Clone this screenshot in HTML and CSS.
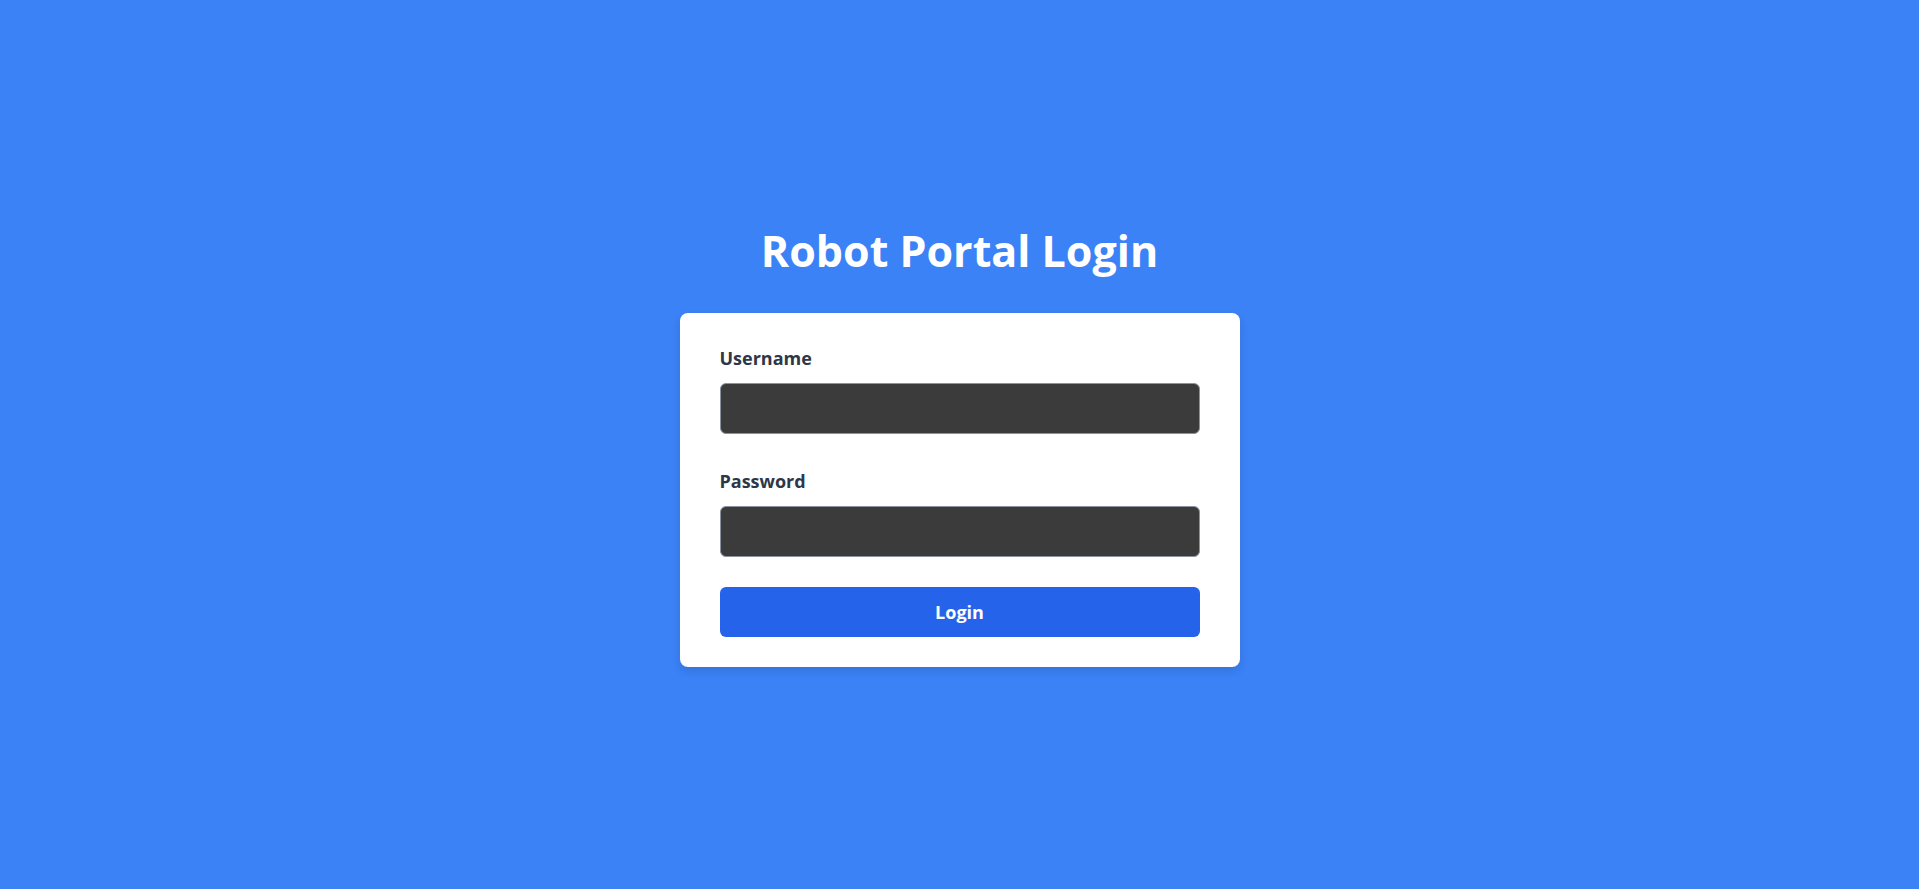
FILE: index.html
```html
<!DOCTYPE html>
<html lang="en">
<head>
<meta charset="utf-8">
<title>Robot Portal Login</title>
<link rel="stylesheet" href="styles.css">
</head>
<body>
<main class="page">
  <h1 class="title">Robot Portal Login</h1>
  <form class="card">
    <div class="field">
      <label class="label" for="username">Username</label>
      <input class="input" id="username" type="text">
    </div>
    <div class="field">
      <label class="label" for="password">Password</label>
      <input class="input" id="password" type="password">
    </div>
    <button class="button" type="button">Login</button>
  </form>
</main>
</body>
</html>
```

FILE: styles.css
```css
html, body {
  margin: 0;
  padding: 0;
}
body {
  background: #3b82f6;
  font-family: "Open Sans", "Noto Sans", sans-serif;
}
.page {
  min-height: 889px;
  height: 100vh;
  display: flex;
  flex-direction: column;
  align-items: center;
  justify-content: center;
  padding-top: 2px;
  box-sizing: border-box;
}
.title {
  margin: 0 0 36px;
  color: #ffffff;
  font-size: 43px;
  font-weight: 700;
  line-height: 52px;
}
.card {
  box-sizing: border-box;
  width: 560px;
  padding: 33px 40px 30px;
  background: #ffffff;
  border-radius: 8px;
  box-shadow: 0 4px 8px rgba(0, 0, 0, 0.12);
  display: flex;
  flex-direction: column;
}
.field {
  display: flex;
  flex-direction: column;
}
.field + .field {
  margin-top: 35px;
}
.label {
  color: #2d3748;
  font-size: 18px;
  font-weight: 700;
  line-height: 24px;
  margin-bottom: 13px;
}
.input {
  box-sizing: border-box;
  height: 51px;
  width: 100%;
  background: #3b3b3b;
  border: 1px solid #8b93a1;
  border-radius: 6px;
  color: #fff;
  font-size: 16px;
  padding: 0 12px;
}
.button {
  margin-top: 30px;
  height: 50px;
  border: none;
  border-radius: 6px;
  background: #2563eb;
  color: #fff;
  font-family: inherit;
  font-size: 18px;
  font-weight: 700;
}
```
